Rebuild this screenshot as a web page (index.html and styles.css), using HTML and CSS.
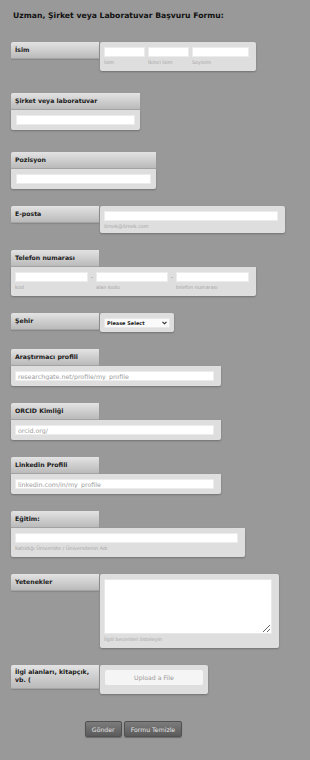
FILE: index.html
```html
<!DOCTYPE html>
<html lang="tr">
<head>
<meta charset="utf-8">
<meta name="viewport" content="width=device-width, initial-scale=1">
<link rel="stylesheet" href="styles.css">
</head>
<body>

<form class="form">
  <h1 class="form-title">Uzman, Şirket veya Laboratuvar Başvuru Formu:</h1>

  <ul class="fields">
    <li class="field side loose">
      <label class="field-label">İsim</label>
      <div class="panel">
        <div class="parts name-parts">
          <div class="part"><input class="box w41" type="text"><span class="sub">İsim</span></div>
          <div class="part"><input class="box w41" type="text"><span class="sub">İkinci İsim</span></div>
          <div class="part"><input class="box w57" type="text"><span class="sub">Soyisim</span></div>
        </div>
      </div>
    </li>

    <li class="field top loose">
      <label class="field-label full">Şirket veya laboratuvar</label>
      <div class="panel even"><input class="box w119" type="text"></div>
    </li>

    <li class="field top">
      <label class="field-label full">Pozisyon</label>
      <div class="panel even"><input class="box w135" type="text"></div>
    </li>

    <li class="field side">
      <label class="field-label">E-posta</label>
      <div class="panel tight">
        <input class="box w174" type="email">
        <span class="sub">örnek@örnek.com</span>
      </div>
    </li>

    <li class="field top">
      <label class="field-label">Telefon numarası</label>
      <div class="panel">
        <div class="parts">
          <div class="part"><input class="box w73" type="tel"><span class="sub">kod</span></div>
          <span class="dash">-</span>
          <div class="part"><input class="box w72" type="tel"><span class="sub">alan kodu</span></div>
          <span class="dash">-</span>
          <div class="part"><input class="box w73" type="tel"><span class="sub">telefon numarası</span></div>
        </div>
      </div>
    </li>

    <li class="field side">
      <label class="field-label">Şehir</label>
      <div class="panel narrow">
        <div class="select-wrap">
          <select class="select">
            <option>Please Select</option>
          </select>
          <svg class="chev" width="5" height="4" viewBox="0 0 5 4"><path d="M0.5 0.8 L2.5 2.8 L4.5 0.8" fill="none" stroke="#222" stroke-width="1.1"/></svg>
        </div>
      </div>
    </li>

    <li class="field top">
      <label class="field-label">Araştırmacı profili</label>
      <div class="panel"><input class="box w199" type="text" placeholder="researchgate.net/profile/my_profile"></div>
    </li>

    <li class="field top">
      <label class="field-label">ORCID Kimliği</label>
      <div class="panel"><input class="box w199" type="text" placeholder="orcid.org/"></div>
    </li>

    <li class="field top">
      <label class="field-label">Linkedin Profili</label>
      <div class="panel"><input class="box w199" type="text" placeholder="linkedin.com/in/my_profile"></div>
    </li>

    <li class="field top">
      <label class="field-label">Eğitim:</label>
      <div class="panel">
        <input class="box w223" type="text">
        <span class="sub">Katıldığı Üniversite / Üniversitenin Adı</span>
      </div>
    </li>

    <li class="field side">
      <label class="field-label">Yetenekler</label>
      <div class="panel">
        <textarea class="area"></textarea>
        <span class="sub">İlgili becerileri listeleyin</span>
      </div>
    </li>

    <li class="field side">
      <label class="field-label two-line">İlgi alanları, kitapçık, vb. (</label>
      <div class="panel even">
        <button class="upload" type="button">Upload a File</button>
      </div>
    </li>
  </ul>

  <div class="buttons">
    <button class="btn" type="submit">Gönder</button>
    <button class="btn" type="reset">Formu Temizle</button>
  </div>
</form>

</body>
</html>
```

FILE: styles.css
```css
* {
  box-sizing: border-box;
}

body {
  margin: 0;
  background: #999;
  font-family: "DejaVu Sans", Verdana, sans-serif;
  color: #1a1a1a;
}

.form {
  min-height: 760px;
  padding: 11px 0 20px 11px;
}

.form-title {
  margin: 0 0 21px 2px;
  font-size: 7.7px;
  line-height: 10px;
  font-weight: bold;
  color: #111;
}

.fields {
  list-style: none;
  margin: 0;
  padding: 0;
}

.field {
  margin-bottom: 17px;
}

.field.loose {
  margin-bottom: 22px;
}

.side {
  display: flex;
  align-items: flex-start;
}

.top {
  display: flex;
  flex-direction: column;
  align-items: flex-start;
  width: max-content;
}

.field-label {
  display: block;
  width: 88px;
  height: 17px;
  padding: 3px 4px 0 4px;
  font-size: 6.2px;
  line-height: 9px;
  font-weight: bold;
  color: #1a1a1a;
  background: linear-gradient(#e3e3e3, #bababa);
  border-bottom: 1px solid #a4a4a4;
  border-radius: 2px 0 0 0;
  box-shadow: 0 1px 1px rgba(0, 0, 0, 0.12);
}

.field-label.full {
  align-self: stretch;
  width: auto;
}

.field-label.two-line {
  height: auto;
  line-height: 8px;
  padding: 3px 2px 4px 4px;
}

.side .panel {
  margin-left: 1px;
  border-radius: 2px;
}

.panel {
  display: flex;
  flex-direction: column;
  align-items: flex-start;
  padding: 5px 7px 5px 4px;
  background: #dedede;
  border-radius: 0 0 2px 2px;
  box-shadow: 0 1px 2px rgba(0, 0, 0, 0.25);
}

.panel.even {
  padding-left: 5px;
  padding-right: 5px;
}

.panel.tight {
  padding-bottom: 3px;
}

.panel.narrow {
  padding: 5px 4px 4px 4px;
}

.box {
  display: block;
  height: 10px;
  margin: 0;
  padding: 0 2px;
  background: #fff;
  border: 1px solid #ececec;
  font-family: "DejaVu Sans", Verdana, sans-serif;
  font-size: 6.3px;
  color: #555;
  outline: none;
}

.box::placeholder {
  color: #9a9a9a;
}

.w41 { width: 41px; }
.w57 { width: 57px; }
.w72 { width: 72px; }
.w73 { width: 73px; }
.w119 { width: 119px; }
.w135 { width: 135px; }
.w174 { width: 174px; }
.w199 { width: 199px; }
.w223 { width: 223px; }

.parts {
  display: flex;
}

.name-parts {
  gap: 3px;
}

.part {
  display: flex;
  flex-direction: column;
}

.dash {
  width: 8px;
  text-align: center;
  font-size: 6px;
  line-height: 10px;
  color: #888;
}

.sub {
  display: block;
  margin-top: 2px;
  font-size: 4.9px;
  line-height: 7px;
  color: #a6a6a6;
}

.select-wrap {
  position: relative;
}

.select {
  display: block;
  width: 66px;
  height: 10px;
  margin: 0;
  padding: 0 2px;
  appearance: none;
  -webkit-appearance: none;
  background: #fafafa;
  border: 1px solid #e8e8e8;
  border-radius: 1px;
  font-family: "DejaVu Sans", Verdana, sans-serif;
  font-size: 5px;
  font-weight: bold;
  line-height: 8px;
  color: #222;
}

.chev {
  position: absolute;
  right: 3px;
  top: 3px;
}

.area {
  display: block;
  width: 168px;
  height: 55px;
  margin: 0;
  background: #fff;
  border: 1px solid #e8e8e8;
  resize: vertical;
  outline: none;
}

.upload {
  width: 98px;
  height: 15px;
  margin: 0 0 4px 0;
  padding: 0;
  background: #f5f5f5;
  border: none;
  border-radius: 2px;
  font-family: "DejaVu Sans", Verdana, sans-serif;
  font-size: 6.2px;
  color: #9a9a9a;
}

.buttons {
  display: flex;
  justify-content: center;
  gap: 2px;
  width: 245px;
  margin-top: 27px;
}

.btn {
  height: 16px;
  padding: 0 6px;
  background: linear-gradient(#7c7c7c, #5b5b5b);
  border: 1px solid #515151;
  border-radius: 2px;
  box-shadow: 0 1px 1px rgba(0, 0, 0, 0.3);
  font-family: "DejaVu Sans", Verdana, sans-serif;
  font-size: 6.2px;
  color: #e2e2e2;
}
```
